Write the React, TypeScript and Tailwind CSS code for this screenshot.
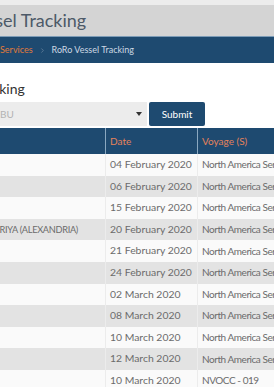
import { ChevronRight } from 'lucide-react';

interface Sailing {
  port: string;
  date: string;
  voyage: string;
}

const sailings: Sailing[] = [
  { port: 'Durban', date: '04 February 2020', voyage: 'North America Service - 041' },
  { port: 'Durban', date: '06 February 2020', voyage: 'North America Service - 041' },
  { port: 'Durban', date: '15 February 2020', voyage: 'North America Service - 041' },
  { port: 'AL ISKANDARIYA (ALEXANDRIA)', date: '20 February 2020', voyage: 'North America Service - 041' },
  { port: 'Durban', date: '21 February 2020', voyage: 'North America Service - 041' },
  { port: 'Durban', date: '24 February 2020', voyage: 'North America Service - 041' },
  { port: 'Durban', date: '02 March 2020', voyage: 'North America Service - 041' },
  { port: 'Durban', date: '08 March 2020', voyage: 'North America Service - 041' },
  { port: 'Durban', date: '10 March 2020', voyage: 'North America Service - 041' },
  { port: 'Durban', date: '12 March 2020', voyage: 'North America Service - 041' },
  { port: 'Durban', date: '10 March 2020', voyage: 'NVOCC - 019' },
];

const App = () => {
  return (
    <div className="w-[274px] h-[387px] overflow-hidden bg-white font-['Lato','Open_Sans',sans-serif]">
      <div className="h-[5px] bg-[#ececec]" />
      <div className="h-[31px] bg-[#d4d4d4] flex items-center overflow-hidden">
        <h1 className="ml-[-33px] text-[18px] text-[#4d5a68] whitespace-nowrap">Vessel Tracking</h1>
      </div>
      <div className="h-[27px] bg-[#1e4a70] border-t border-[#7d9cb7] flex items-center overflow-hidden text-[9px] whitespace-nowrap">
        <span className="text-[#e17a3a]">Services</span>
        <ChevronRight size={7} className="mx-[6px] text-[#7d94ab]" />
        <span className="text-[#cdd8e3]">RoRo Vessel Tracking</span>
      </div>

      <h2 className="mt-[16px] ml-[-68px] text-[14px] leading-[20px] text-[#333] whitespace-nowrap">Vessel Tracking</h2>

      <div className="mt-[3px] flex items-center gap-[2px]">
        <div className="w-[147px] h-[24px] bg-[#ececec] flex items-center justify-between pr-[5px] text-[10px] text-[#b3b3b3]">
          <span>BU</span>
          <span className="w-0 h-0 border-l-[3px] border-r-[3px] border-t-[4px] border-l-transparent border-r-transparent border-t-[#333]" />
        </div>
        <button className="w-[56px] h-[24px] bg-[#1e4a70] text-white text-[10px] rounded-[2px]">Submit</button>
      </div>

      <div className="mt-[2px]">
        <div className="grid grid-cols-[106px_92px_1fr] h-[26px] bg-[#1e4a70] text-[10px] text-[#e5825a]">
          <div className="border-r border-[#8aa8c1]" />
          <div className="border-r border-[#8aa8c1] flex items-center pl-[4px]">Date</div>
          <div className="flex items-center pl-[4px] whitespace-nowrap">Voyage (S)</div>
        </div>
        {sailings.map((s, i) => (
          <div
            key={i}
            className={`grid grid-cols-[106px_92px_1fr] h-[21.6px] text-[#6b6b6b] whitespace-nowrap ${
              i % 2 === 1 ? 'bg-[#e3e3e3]' : 'bg-[#fafafa]'
            }`}
          >
            <div className="border-r border-[#ececec] flex items-center justify-end overflow-hidden pr-[27px] text-[9.2px] tracking-[-0.3px]">
              {s.port.length > 10 ? s.port : ''}
            </div>
            <div className="border-r border-[#ececec] flex items-center pl-[4px] overflow-hidden text-[10.4px]">{s.date}</div>
            <div className="flex items-center pl-[4px] overflow-hidden text-[10px] tracking-[-0.45px]">{s.voyage}</div>
          </div>
        ))}
      </div>
    </div>
  );
};

export default App;
